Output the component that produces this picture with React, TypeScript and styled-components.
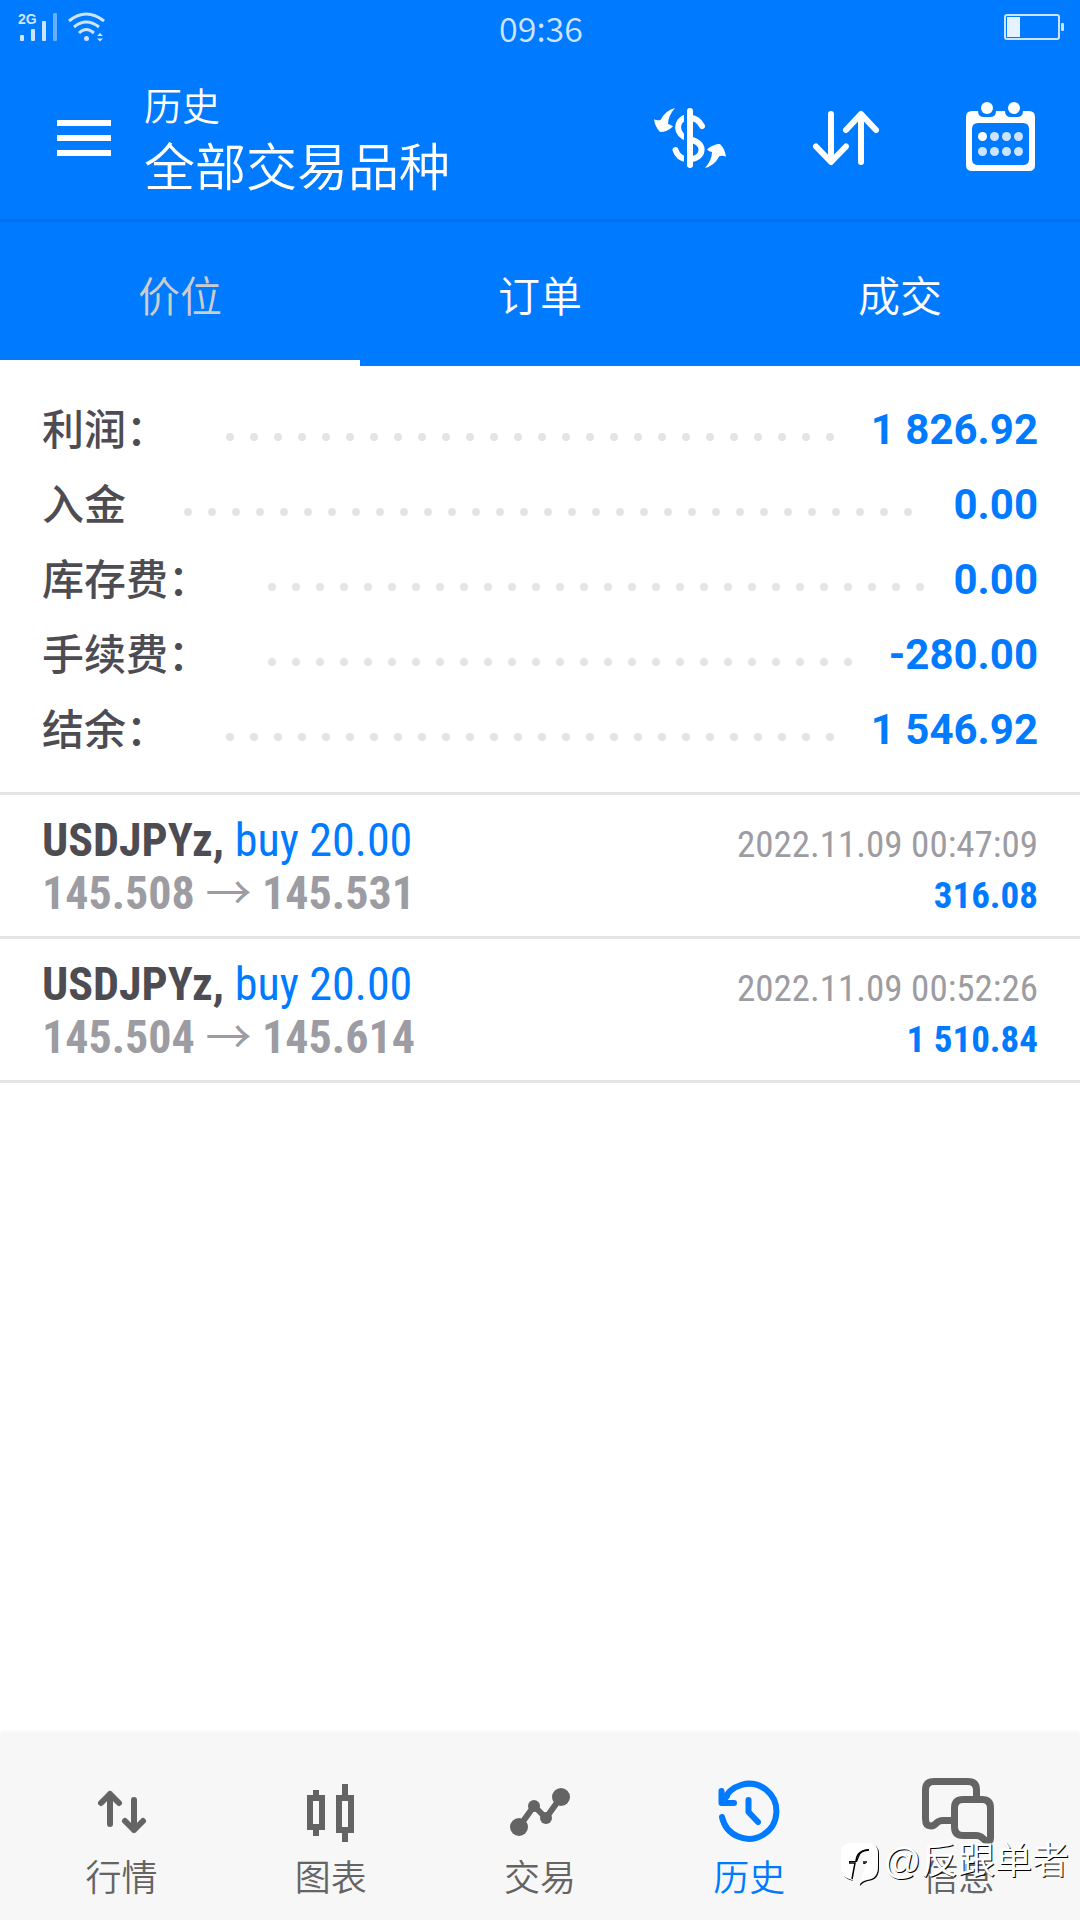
import React from "react";
import styled, { createGlobalStyle } from "styled-components";

const blue = "#007aff";
const ink = "#4d4c52";
const muted = "#9c9ca2";
const rule = "#e4e4e4";
const navGrey = "#646464";

const sans = `Roboto, "Noto Sans CJK SC", sans-serif`;
const cjk = `"Noto Sans CJK SC", Roboto, sans-serif`;
const condensed = `"Roboto Condensed", "Liberation Sans Narrow", Roboto, "Noto Sans CJK SC", sans-serif`;

const GlobalStyle = createGlobalStyle`
  *, *::before, *::after { box-sizing: border-box; }
  body { margin: 0; background: #fff; font-family: ${sans}; }
  button { margin: 0; padding: 0; border: 0; background: none; font: inherit; color: inherit; cursor: pointer; }
  ul, dl, dd, h1, p { margin: 0; padding: 0; list-style: none; }
  svg { display: block; flex: none; }
`;

const Screen = styled.div`
  position: relative;
  display: flex;
  flex-direction: column;
  min-height: 100vh;
`;

const StatusBar = styled.div`
  display: grid;
  grid-template-columns: 1fr auto 1fr;
  align-items: center;
  height: 57px;
  padding: 0 16px 4px 18px;
  background: ${blue};
  color: #cce4ff;
`;

const Signals = styled.div`
  display: flex;
  gap: 8px;
`;

const Clock = styled.time`
  padding-top: 2px;
  font-family: ${cjk};
  font-size: 34px;
  font-weight: 350;
  line-height: 40px;
`;

const BatterySlot = styled.div`
  display: flex;
  justify-content: flex-end;
`;

const Header = styled.header`
  display: flex;
  align-items: center;
  height: 165px;
  padding: 0 42px 0 48px;
  border-bottom: 3px solid #006fe8;
  background: ${blue};
  color: #fff;
`;

const Titles = styled.div`
  flex: 1;
  margin-left: 24px;
  padding-bottom: 2px;
  font-family: ${cjk};
  font-weight: 350;
`;

const Section = styled.p`
  font-size: 38px;
  line-height: 54px;
`;

const Title = styled.h1`
  font-size: 51px;
  font-weight: 350;
  line-height: 66px;
`;

const Actions = styled.div`
  display: flex;
  gap: 84px;
`;

const Tabs = styled.div`
  display: grid;
  grid-template-columns: repeat(3, 1fr);
  background: ${blue};
`;

const Tab = styled.button<{ $active?: boolean }>`
  && {
    height: 144px;
    padding-top: 4px;
    border-bottom: 6px solid ${(p) => (p.$active ? "#fff" : blue)};
    color: ${(p) => (p.$active ? "#ccc" : "#fff")};
    font-family: ${cjk};
    font-size: 42px;
    font-weight: 350;
  }
`;

const Summary = styled.dl`
  && {
    padding: 25px 42px 26px;
    border-bottom: 3px solid ${rule};
  }
`;

const SummaryRow = styled.div`
  display: flex;
  align-items: center;
  height: 75px;
  font-size: 42px;
  line-height: 60px;
`;

const SummaryLabel = styled.dt`
  padding-bottom: 4px;
  color: ${ink};
  font-family: ${cjk};
  font-weight: 500;
`;

const Leader = styled.div`
  display: flex;
  flex: 1;
  flex-wrap: wrap;
  gap: 16px;
  height: 8px;
  margin: 16px 18px 0 58px;
  overflow: hidden;
`;

const Dot = styled.i`
  width: 8px;
  height: 8px;
  border-radius: 50%;
  background: ${rule};
`;

const SummaryValue = styled.dd`
  && {
    padding-top: 2px;
    color: ${blue};
    font-weight: 700;
  }
`;

const Deal = styled.li`
  display: flex;
  justify-content: space-between;
  height: 144px;
  padding: 20px 42px 0;
  border-bottom: 3px solid ${rule};
  font-family: ${condensed};
  line-height: 51px;
`;

const DealMain = styled.div`
  color: ${muted};
  font-size: 46px;
  font-weight: 700;
`;

const DealSide = styled.div`
  padding-top: 4px;
  color: ${muted};
  font-size: 37px;
  text-align: right;
`;

const Symbol = styled.p`
  color: ${ink};
`;

const Order = styled.span`
  color: ${blue};
  font-weight: 400;
`;

const Arrow = styled.span`
  font-family: ${cjk};
  font-weight: 400;
  line-height: 1;
`;

const Profit = styled.p`
  color: ${blue};
  font-weight: 700;
`;

const History = styled.main`
  flex: 1;
`;

const BottomNav = styled.nav`
  display: grid;
  grid-template-columns: repeat(5, 1fr);
  height: 186px;
  padding: 42px 17px 0;
  background: #f7f7f7;
  box-shadow: 0 -2px 4px rgba(0, 0, 0, 0.05);
`;

const NavItem = styled.button<{ $active?: boolean }>`
  && {
    display: flex;
    flex-direction: column;
    align-items: center;
    color: ${(p) => (p.$active ? blue : navGrey)};
    font-family: ${cjk};
    font-size: 36px;
    font-weight: 350;
    line-height: 54px;
  }
`;

const Watermark = styled.div`
  position: absolute;
  right: 11px;
  bottom: 25px;
  display: flex;
  align-items: center;
  gap: 4px;
  color: #fff;
  font-family: "Liberation Sans", "Noto Sans CJK SC", sans-serif;
  font-size: 37px;
  font-weight: 400;
  line-height: 54px;
  text-shadow: 1px 1px 0 #000;
  pointer-events: none;
`;

const WatermarkName = styled.span`
  padding-bottom: 6px;
`;

const Icon = ({ children }: { children: React.ReactNode }) => (
  <svg width="72" height="72" viewBox="0 0 72 72" fill="none" stroke="currentColor" strokeWidth="6"
    strokeLinecap="round" strokeLinejoin="round" aria-hidden="true">
    {children}
  </svg>
);

const SignalIcon = () => (
  <svg width="40" height="30" viewBox="0 0 40 30" fill="currentColor">
    <text x="0" y="12" fontFamily="Liberation Sans, sans-serif" fontWeight="700" fontSize="14">2G</text>
    <rect x="2" y="23" width="4" height="6" rx="1" />
    <rect x="13" y="17" width="4" height="12" rx="1" />
    <rect x="24" y="9" width="4" height="20" rx="1" />
    <rect x="35" y="1" width="4" height="28" rx="1" opacity=".5" />
  </svg>
);

const WifiIcon = () => (
  <svg width="40" height="30" viewBox="0 0 40 30" fill="none" stroke="currentColor" strokeWidth="3">
    <path d="M3 9Q20 -5 38 9M8 15Q20 5 33 15M13 21Q20 14 28 21" />
    <circle cx="20.500" cy="26.500" r="2.500" fill="currentColor" stroke="none" />
    <path d="M31 24l3-3 3 3zM31 26.500l3 3 3-3z" fill="currentColor" stroke="none" />
  </svg>
);

const BatteryIcon = () => (
  <svg width="60" height="26" viewBox="0 0 60 26">
    <rect x="1" y="1" width="54" height="24" rx="2" fill="none" stroke="#cce4ff" strokeWidth="2" />
    <rect x="3" y="3" width="13" height="20" fill="#e5f2ff" />
    <rect x="57" y="9" width="3" height="8" rx="1" fill="#cce4ff" />
  </svg>
);

const currencyArrow = "M21 6Q12 8 6.500 18Q3 19 0 17.300Q1 25 6 30Q13 30 19 24.500Q17 22.500 14 22Q14 14 21 6Z";

const CurrencyIcon = () => (
  <Icon>
    <path d="M36 16C42 16 46 20 48 24M33 15C21 18 21 33 34 36.500L38 38C52 42 50 56 36 57.500M21.500 48C23 53 27 56.500 33 57.500" />
    <path d="M30 9V63H36V9Z" fill={blue} stroke="none" />
    <path d="M36 9V63" />
    <path d={currencyArrow} fill="currentColor" stroke="none" />
    <path d={currencyArrow} fill="currentColor" stroke="none" transform="rotate(180 36 36)" />
  </Icon>
);

const SortIcon = () => (
  <Icon>
    <path d="M21 12V59M6 44.500L21 60L36 44.500M51 60V13M36 28L51 12L66 28" />
  </Icon>
);

const CalendarIcon = () => (
  <Icon>
    <g stroke="none" fill="currentColor">
      <path fillRule="evenodd" d="M6 9H12Q12 15 18 15H24Q30 15 30 9H39Q39 15 45 15H51Q57 15 57 9H63Q69 9 69 15V63Q69 69 63 69H6Q0 69 0 63V15Q0 9 6 9ZM12 21Q6 21 6 27V57Q6 63 12 63H57Q63 63 63 57V27Q63 21 57 21Z" />
      <circle cx="21" cy="6" r="6" />
      <circle cx="48" cy="6" r="6" />
      {[34.5, 49.5].map((cy) =>
        [16.5, 28.5, 40.5, 52.5].map((cx) => (
          <circle key={`${cx}-${cy}`} cx={cx} cy={cy} r="4.500" fill={cx < 20 && cy < 40 ? "#fff" : "#cce4ff"} />
        ))
      )}
    </g>
  </Icon>
);

const MenuIcon = () => (
  <Icon>
    <path d="M9 21H63M9 36H63M9 51H63" strokeLinecap="butt" />
  </Icon>
);

const QuotesIcon = () => (
  <Icon>
    <path d="M24 48V18M15 27L24 18L33 27M48 24V54M39 45L48 54L57 45" />
  </Icon>
);

const ChartIcon = () => (
  <Icon>
    <path strokeLinecap="butt" strokeLinejoin="miter" d="M15 22H27V51H15ZM21 14V22M21 51V60M44 22H56V54H44ZM50 8V22M50 54V66" />
  </Icon>
);

const TradeIcon = () => (
  <Icon>
    <path d="M15 51L30 30L42 42L57 21" />
    <g stroke="none" fill="currentColor">
      <circle cx="15" cy="51" r="9" />
      <circle cx="30" cy="30" r="6" />
      <circle cx="42" cy="42" r="6" />
      <circle cx="57" cy="21" r="9" />
    </g>
  </Icon>
);

const HistoryIcon = () => (
  <Icon>
    <path d="M9 41A27.500 27.500 0 1 0 10 26M8.500 15V27H21M9 26L14 20M35.500 24V36L45 46" />
  </Icon>
);

const MessagesIcon = () => (
  <Icon>
    <g strokeWidth="7">
      <path strokeLinecap="butt" d="M54.500 21V14Q54.500 5.500 46 5.500H12Q3.500 5.500 3.500 14V43Q3.500 50 9 50Q12 50 14.500 47Q17 44.500 21 44.500H30" />
      <path d="M68.500 62V32Q68.500 23.500 60 23.500H41Q32.500 23.500 32.500 32V51Q32.500 59.500 41 59.500H54Q58 59.500 60.500 62Q63 65 66 65Q68.500 65 68.500 62Z" />
    </g>
  </Icon>
);

const BrandIcon = () => {
  const bubble = "M10 0H27Q37 0 37 10V24Q37 36 26 37Q21 38 18 42L19 31Q20 25 25 20H21L22 18Q22 9 28 8V6Q18 7 17 13L15 18H8V20H14L11 37Q0 35 0 24V10Q0 0 10 0Z";
  return (
    <svg width="38" height="44" viewBox="0 0 38 44">
      <path d={bubble} fill="#000" transform="translate(1 1)" />
      <path d={bubble} fill="#fff" />
      <path d="M14 20H17L13 39L11 37ZM20 22H25L19 39H16Z" fill="#f7f7f7" />
      <path d="M8 20H14L11 36M15 18Q16 7 28 7M22 19H26" fill="none" stroke="#000" strokeWidth="1.500" />
    </svg>
  );
};

const summary = [
  ["利润：", "1 826.92"],
  ["入金", "0.00"],
  ["库存费：", "0.00"],
  ["手续费：", "-280.00"],
  ["结余：", "1 546.92"],
];

const deals = [
  { open: "145.508", close: "145.531", time: "2022.11.09 00:47:09", profit: "316.08" },
  { open: "145.504", close: "145.614", time: "2022.11.09 00:52:26", profit: "1 510.84" },
];

const navItems = [
  { label: "行情", icon: <QuotesIcon /> },
  { label: "图表", icon: <ChartIcon /> },
  { label: "交易", icon: <TradeIcon /> },
  { label: "历史", icon: <HistoryIcon />, active: true },
  { label: "信息", icon: <MessagesIcon /> },
];

export default function App() {
  return (
    <>
      <GlobalStyle />
      <Screen>
        <StatusBar>
          <Signals>
            <SignalIcon />
            <WifiIcon />
          </Signals>
          <Clock>09:36</Clock>
          <BatterySlot>
            <BatteryIcon />
          </BatterySlot>
        </StatusBar>
        <Header>
          <button type="button"><MenuIcon /></button>
          <Titles>
            <Section>历史</Section>
            <Title>全部交易品种</Title>
          </Titles>
          <Actions>
            <button type="button"><CurrencyIcon /></button>
            <button type="button"><SortIcon /></button>
            <button type="button"><CalendarIcon /></button>
          </Actions>
        </Header>
        <Tabs role="tablist">
          <Tab type="button" role="tab" aria-selected="true" $active>价位</Tab>
          <Tab type="button" role="tab" aria-selected="false">订单</Tab>
          <Tab type="button" role="tab" aria-selected="false">成交</Tab>
        </Tabs>
        <History>
          <Summary>
            {summary.map(([label, value]) => (
              <SummaryRow key={label}>
                <SummaryLabel>{label}</SummaryLabel>
                <Leader aria-hidden="true">
                  {Array.from({ length: 60 }, (_, i) => <Dot key={i} />)}
                </Leader>
                <SummaryValue>{value}</SummaryValue>
              </SummaryRow>
            ))}
          </Summary>
          <ul>
            {deals.map((deal) => (
              <Deal key={deal.time}>
                <DealMain>
                  <Symbol>USDJPYz, <Order>buy 20.00</Order></Symbol>
                  <p>{deal.open} <Arrow>→</Arrow> {deal.close}</p>
                </DealMain>
                <DealSide>
                  <p>{deal.time}</p>
                  <Profit>{deal.profit}</Profit>
                </DealSide>
              </Deal>
            ))}
          </ul>
        </History>
        <BottomNav>
          {navItems.map((item) => (
            <NavItem key={item.label} type="button" $active={item.active}>
              {item.icon}
              {item.label}
            </NavItem>
          ))}
        </BottomNav>
        <Watermark>
          <BrandIcon />
          <WatermarkName>@反跟单者</WatermarkName>
        </Watermark>
      </Screen>
    </>
  );
}
